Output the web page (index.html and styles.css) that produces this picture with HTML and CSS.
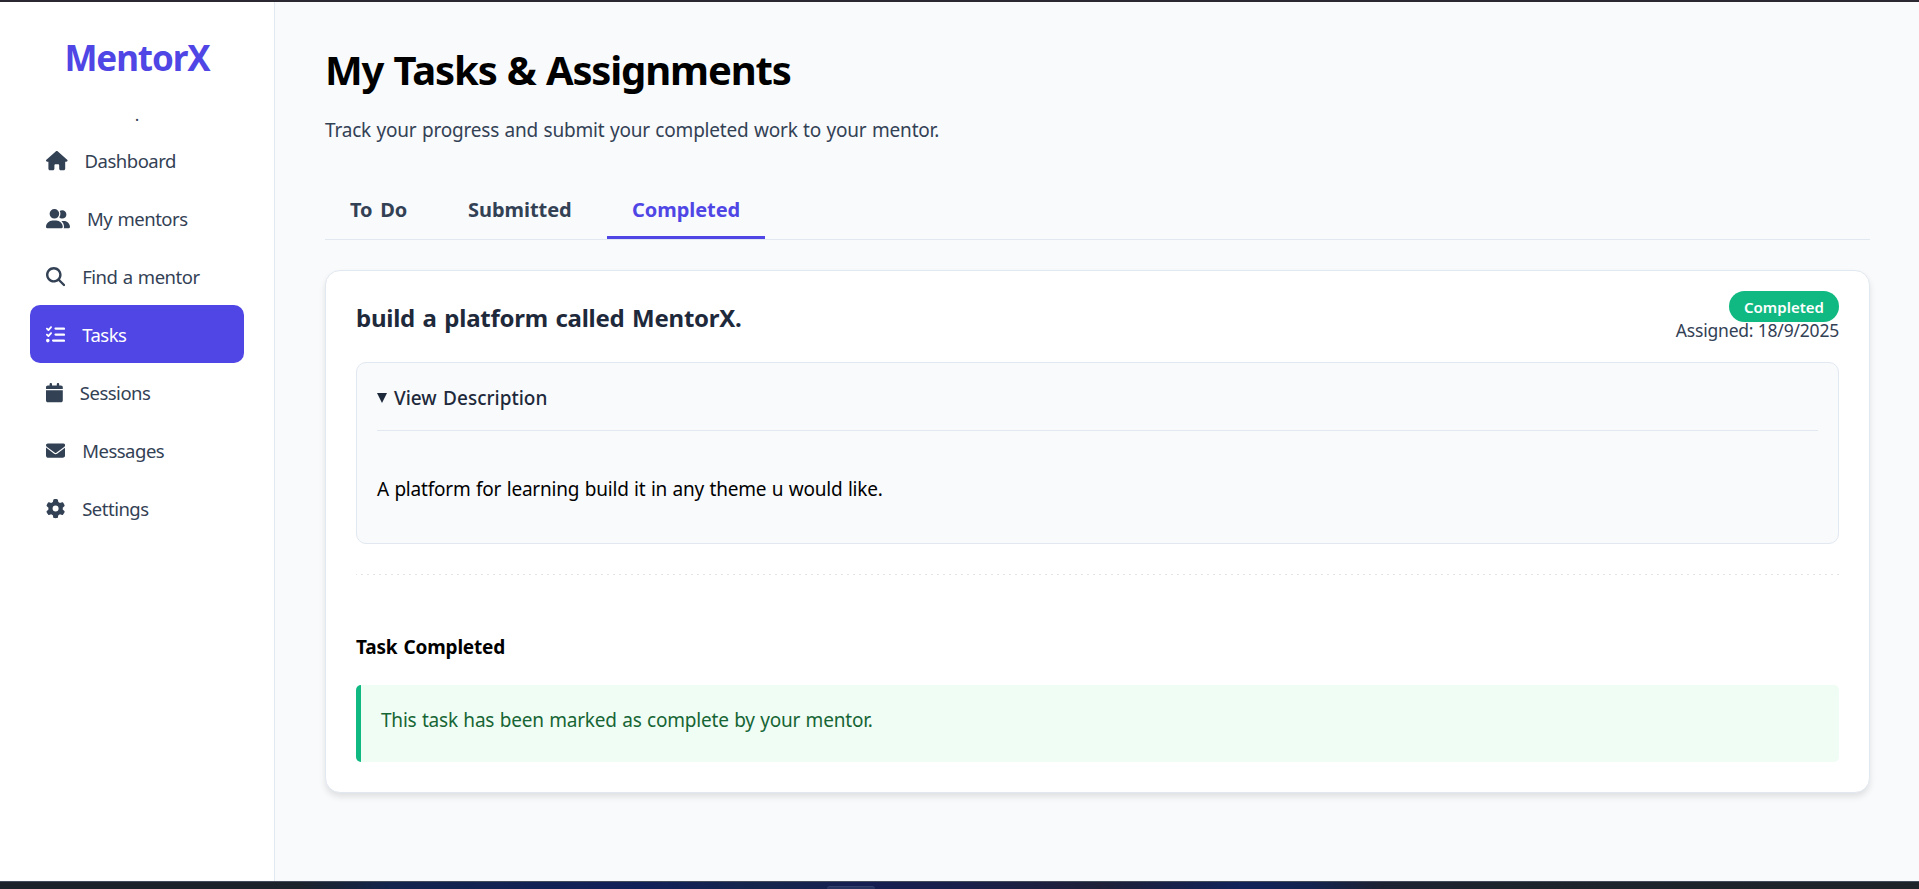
FILE: index.html
```html
<!DOCTYPE html>
<html lang="en">
<head>
<meta charset="utf-8">
<title>MentorX</title>
<link rel="stylesheet" href="styles.css">
</head>
<body>
<div class="window-edge"></div>
<div class="app">
  <aside class="sidebar">
    <div class="logo"><span>MentorX</span></div>
    <div class="dot">.</div>
    <nav class="nav">
      <a class="nav-item"><svg class="icon" viewBox="0 0 576 512" width="21.6" height="19.2"><path d="M575.8 255.500c0 18-15 32.100-32 32.100h-32l.7 160.200c0 2.700-.2 5.400-.5 8.100V472c0 22.100-17.900 40-40 40h-16c-1.100 0-2.200 0-3.300-.1c-1.400.1-2.800.1-4.200.1H392c-22.100 0-40-17.900-40-40v-88c0-17.700-14.300-32-32-32h-64c-17.700 0-32 14.300-32 32v88c0 22.100-17.900 40-40 40h-80c-22.100 0-40-17.900-40-40V287.600H32c-18 0-32-14-32-32.100c0-9 3-17 10-24L266.400 8c7-7 15-8 22-8s15 2 21 7l255.400 224.500c8 7 12 15 11 24z"/></svg><span>Dashboard</span></a>
      <a class="nav-item"><svg class="icon" viewBox="0 0 640 512" width="24" height="19.2"><path d="M96 128a128 128 0 1 1 256 0A128 128 0 1 1 96 128zM0 482.300C0 383.800 79.800 304 178.300 304h91.400C368.200 304 448 383.800 448 482.300c0 16.400-13.300 29.700-29.700 29.700H29.700C13.300 512 0 498.700 0 482.300zM609.300 512H471.400c5.400-9.400 8.600-20.300 8.600-32v-8c0-60.700-27.100-115.200-69.800-151.800c2.400-.1 4.700-.2 7.100-.2h61.400C567.800 320 640 392.200 640 481.300c0 17-13.800 30.700-30.700 30.700zM432 256c-31 0-59-12.600-79.300-32.900C372.400 196.500 384 163.600 384 128c0-26.800-6.600-52.100-18.300-74.300C384.300 40.100 407.200 32 432 32c61.900 0 112 50.100 112 112s-50.100 112-112 112z"/></svg><span>My mentors</span></a>
      <a class="nav-item"><svg class="icon" viewBox="0 0 512 512" width="19.2" height="19.2"><path d="M416 208c0 45.900-14.900 88.300-40 122.700L502.600 457.400c12.500 12.500 12.500 32.800 0 45.300s-32.800 12.500-45.300 0L330.700 376c-34.400 25.200-76.800 40-122.700 40C93.100 416 0 322.900 0 208S93.100 0 208 0S416 93.100 416 208zM208 352a144 144 0 1 0 0-288 144 144 0 1 0 0 288z"/></svg><span>Find a mentor</span></a>
      <a class="nav-item active"><svg class="icon" viewBox="0 0 512 512" width="19.2" height="19.2"><path d="M152.100 38.200c9.900 8.900 10.700 24 1.800 33.900l-72 80c-4.400 4.900-10.600 7.800-17.200 7.900s-12.900-2.400-17.600-7L7 113C-2.300 103.600-2.300 88.400 7 79s24.600-9.400 33.900 0l22.100 22.100 55.100-61.200c8.900-9.900 24-10.700 33.900-1.800zm0 160c9.900 8.900 10.700 24 1.800 33.900l-72 80c-4.400 4.900-10.600 7.800-17.200 7.900s-12.900-2.400-17.600-7L7 273c-9.400-9.400-9.400-24.600 0-33.900s24.600-9.400 33.900 0l22.100 22.100 55.100-61.200c8.900-9.900 24-10.700 33.900-1.800zM224 96c0-17.700 14.300-32 32-32H480c17.700 0 32 14.300 32 32s-14.300 32-32 32H256c-17.700 0-32-14.300-32-32zm0 160c0-17.700 14.300-32 32-32H480c17.700 0 32 14.300 32 32s-14.300 32-32 32H256c-17.700 0-32-14.300-32-32zM160 416c0-17.700 14.300-32 32-32H480c17.700 0 32 14.300 32 32s-14.300 32-32 32H192c-17.700 0-32-14.300-32-32zM48 368a48 48 0 1 1 0 96 48 48 0 1 1 0-96z"/></svg><span>Tasks</span></a>
      <a class="nav-item"><svg class="icon" viewBox="0 0 448 512" width="16.8" height="19.2"><path d="M96 32V64H48C21.500 64 0 85.500 0 112v48H448V112c0-26.500-21.500-48-48-48H352V32c0-17.700-14.300-32-32-32s-32 14.300-32 32V64H160V32c0-17.700-14.300-32-32-32S96 14.300 96 32zM448 192H0V464c0 26.500 21.500 48 48 48H400c26.500 0 48-21.500 48-48V192z"/></svg><span>Sessions</span></a>
      <a class="nav-item"><svg class="icon" viewBox="0 0 512 512" width="19.2" height="19.2"><path d="M48 64C21.500 64 0 85.500 0 112c0 15.100 7.100 29.300 19.200 38.400L236.800 313.600c11.400 8.500 27 8.500 38.400 0L492.800 150.400c12.100-9.100 19.200-23.300 19.200-38.400c0-26.500-21.500-48-48-48H48zM0 176V384c0 35.300 28.700 64 64 64H448c35.300 0 64-28.700 64-64V176L294.400 339.200c-22.800 17.100-54 17.100-76.800 0L0 176z"/></svg><span>Messages</span></a>
      <a class="nav-item"><svg class="icon" viewBox="0 0 512 512" width="19.2" height="19.2"><path d="M495.900 166.600c3.200 8.700.5 18.400-6.400 24.600l-43.300 39.400c1.100 8.300 1.700 16.800 1.700 25.400s-.6 17.100-1.700 25.400l43.300 39.400c6.900 6.200 9.600 15.900 6.400 24.600c-4.400 11.900-9.700 23.300-15.800 34.300l-4.700 8.100c-6.600 11-14 21.400-22.100 31.200c-5.900 7.200-15.700 9.600-24.500 6.800l-55.700-17.700c-13.400 10.300-28.200 18.900-44 25.400l-12.500 57.100c-2 9.100-9 16.300-18.200 17.800c-13.800 2.300-28 3.500-42.500 3.500s-28.700-1.200-42.500-3.500c-9.200-1.500-16.200-8.700-18.200-17.800l-12.500-57.100c-15.800-6.500-30.600-15.100-44-25.400L83.100 425.900c-8.800 2.800-18.600.3-24.500-6.800c-8.100-9.800-15.500-20.200-22.100-31.200l-4.700-8.100c-6.100-11-11.400-22.400-15.800-34.300c-3.200-8.700-.5-18.400 6.400-24.600l43.300-39.400C64.600 273.100 64 264.600 64 256s.6-17.100 1.700-25.400L22.400 191.200c-6.900-6.200-9.600-15.900-6.400-24.600c4.400-11.900 9.700-23.300 15.800-34.300l4.700-8.100c6.600-11 14-21.400 22.100-31.200c5.900-7.200 15.700-9.600 24.500-6.800l55.700 17.700c13.400-10.300 28.200-18.900 44-25.400l12.500-57.100c2-9.100 9-16.300 18.200-17.800C227.300 1.200 241.500 0 256 0s28.700 1.200 42.500 3.500c9.200 1.500 16.200 8.700 18.200 17.800l12.500 57.100c15.800 6.500 30.600 15.100 44 25.400l55.700-17.700c8.800-2.800 18.600-.3 24.500 6.800c8.100 9.800 15.500 20.200 22.100 31.200l4.700 8.100c6.100 11 11.400 22.400 15.800 34.300zM256 336a80 80 0 1 0 0-160 80 80 0 1 0 0 160z"/></svg><span>Settings</span></a>
    </nav>
  </aside>
  <main class="main">
    <h1 class="title"><span>My Tasks &amp; Assignments</span></h1>
    <p class="lead"><span>Track your progress and submit your completed work to your mentor.</span></p>
    <div class="tabs">
      <div class="tab tab-todo"><span>To Do</span></div>
      <div class="tab tab-sub"><span>Submitted</span></div>
      <div class="tab tab-done"><span>Completed</span></div>
    </div>
    <section class="card">
      <header class="card-head">
        <h2 class="card-title"><span>build a platform called MentorX.</span></h2>
        <div class="meta">
          <div class="badge"><span>Completed</span></div>
          <div class="assigned"><span>Assigned: 18/9/2025</span></div>
        </div>
      </header>
      <div class="desc">
        <div class="summary"><svg class="marker" viewBox="0 0 10 10" width="10" height="10"><path d="M0 0H10L5 10z"/></svg><span>View Description</span></div>
        <p class="desc-text"><span>A platform for learning build it in any theme u would like.</span></p>
      </div>
      <div class="divider"></div>
      <div class="result">
        <h3 class="result-title"><span>Task Completed</span></h3>
        <div class="notice"><span>This task has been marked as complete by your mentor.</span></div>
      </div>
    </section>
  </main>
</div>
<div class="taskbar"><div class="taskbar-app"></div></div>
</body>
</html>
```
FILE: styles.css
```css
* { box-sizing: border-box; }
body {
  margin: 0;
  height: 889px;
  overflow: hidden;
  display: flex;
  flex-direction: column;
  background: #f8fafc;
  color: #000;
  font-family: "Noto Sans", "Open Sans", sans-serif;
  font-size: 19px;
}
h1, h2, h3, p { margin: 0; }
span { white-space: nowrap; }
.window-edge { height: 2px; background: #2b2831; }
.app { display: flex; height: 879px; }
.sidebar {
  width: 275px;
  background: #fff;
  border-right: 1px solid #e2e8f0;
  padding: 0 30px;
}
.logo {
  height: 56px;
  margin-top: 28px;
  line-height: 56px;
  text-align: center;
  font-size: 35px;
  font-weight: 700;
  color: #4f46e5;
  letter-spacing: -1.1px;
}
.dot { height: 45px; line-height: 58px; text-align: center; font-size: 17px; color: #334155; }
.nav { display: flex; flex-direction: column; }
.nav-item {
  display: flex;
  align-items: center;
  gap: 17px;
  height: 58px;
  padding: 0 16px;
  border-radius: 10px;
  color: #334155;
  font-size: 18.5px;
  letter-spacing: -0.5px;
  word-spacing: 1px;
}
.nav-item.active { background: #4f46e5; color: #fff; }
.icon { fill: currentColor; flex: none; margin-top: 2px; }
.main { flex: 1; padding: 0 49px 0 50px; }
.title { height: 56px; margin-top: 40px; line-height: 56px; font-size: 40px; font-weight: 700; letter-spacing: -1.15px; word-spacing: 1px; }
.lead { height: 30px; margin-top: 17px; line-height: 30px; color: #334155; letter-spacing: -0.2px; word-spacing: 0.75px; }
.tabs { display: flex; gap: 10px; height: 56px; margin-top: 39px; border-bottom: 1px solid #e2e8f0; margin-bottom: 30px; }
.tab { height: 55px; padding: 0 25px; line-height: 51px; font-size: 20px; font-weight: 700; color: #334155; letter-spacing: -0.05px; }
.tab-todo { width: 108px; word-spacing: 2.5px; }
.tab-sub { width: 154px; }
.tab-done { width: 158px; color: #4f46e5; border-bottom: 3px solid #4f46e5; }
.card {
  height: 523px;
  padding: 20px 30px 30px;
  background: #fff;
  border: 1px solid #e2e8f0;
  border-radius: 15px;
  box-shadow: 0 4px 6px rgba(0, 0, 0, 0.1);
}
.card-head { display: flex; justify-content: space-between; height: 71px; }
.card-title { line-height: 54px; font-size: 24px; font-weight: 700; color: #1e293b; letter-spacing: -0.25px; word-spacing: 1.6px; }
.meta { display: flex; flex-direction: column; align-items: flex-end; }
.badge {
  width: 110px;
  height: 31px;
  line-height: 32px;
  border-radius: 16px;
  background: #10b981;
  color: #fff;
  text-align: center;
  font-size: 15px;
  font-weight: 600;
}
.assigned { height: 20px; line-height: 16px; font-size: 17.5px; color: #334155; letter-spacing: -0.2px; }
.desc { height: 182px; padding: 0 20px; background: #f8fafc; border: 1px solid #e2e8f0; border-radius: 10px; }
.summary {
  display: flex;
  align-items: center;
  gap: 7px;
  height: 68px;
  padding-top: 2px;
  border-bottom: 1px solid #e2e8f0;
  color: #1e293b;
  font-weight: 500;
  word-spacing: 1.5px;
}
.marker { fill: currentColor; }
.desc-text { line-height: 116px; letter-spacing: -0.2px; word-spacing: 0.7px; }
.divider {
  height: 1px;
  margin-top: 30px;
  background: repeating-linear-gradient(90deg, #e2e4e8 0 1px, transparent 1px 5px, #e2e4e8 5px 6px);
}
.result-title { height: 110px; padding-top: 57px; line-height: 30px; font-size: 19px; font-weight: 700; letter-spacing: -0.2px; word-spacing: 1.5px; }
.notice {
  height: 77px;
  padding-left: 20px;
  border-left: 5px solid #10b981;
  border-radius: 5px;
  background: #f0fdf4;
  color: #166534;
  line-height: 70px;
  letter-spacing: -0.2px;
  word-spacing: 0.7px;
}
.taskbar {
  display: flex;
  height: 8px;
  border-top: 1px solid #454c5c;
  background: linear-gradient(90deg, #1c232b 0 300px, #13244d 390px, #122059 640px, #15264c 760px, #161f52 860px, #191f4a 960px, #1f2038 1100px, #12235a 1240px, #13234f 1310px, #1d2233 1380px, #1e242c 1500px, #1d2328);
}
.taskbar-app { width: 48px; height: 3px; margin: 4px 0 0 827px; border-radius: 4px 4px 0 0; background: #263260; border-top: 1px solid #34406c; }
```
